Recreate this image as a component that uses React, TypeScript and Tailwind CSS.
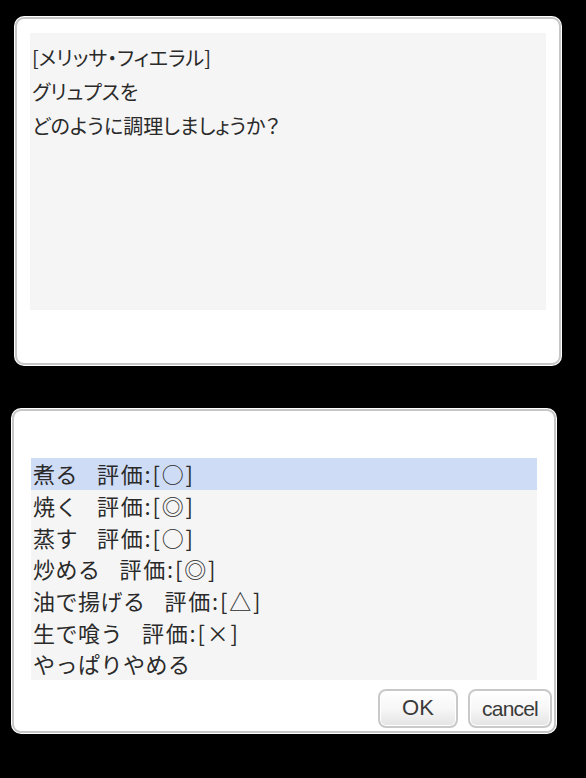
import { FC } from "react";

const jp = "font-['Noto_Sans_CJK_JP','Noto_Sans',sans-serif]";

const options: { name: string; rating?: string }[] = [
  { name: "煮る", rating: "○" },
  { name: "焼く", rating: "◎" },
  { name: "蒸す", rating: "○" },
  { name: "炒める", rating: "◎" },
  { name: "油で揚げる", rating: "△" },
  { name: "生で喰う", rating: "×" },
  { name: "やっぱりやめる" },
];

const Frame: FC<{ className: string; children: React.ReactNode }> = ({ className, children }) => (
  <div className={`rounded-[10px] bg-white p-px ${className}`}>
    <div className="h-full w-full rounded-[9px] border-2 border-[#c6c6c6] bg-white">{children}</div>
  </div>
);

const Button: FC<{ label: string; className: string }> = ({ label, className }) => (
  <button
    className={`h-[39px] rounded-[8px] border-2 border-[#c9c9c9] bg-gradient-to-b from-white via-[#f7f7f7] to-[#e4e4e4] font-['Liberation_Sans',sans-serif] leading-none text-[#3a3a3a] shadow-[inset_0_0_0_1px_#fff] ${className}`}
  >
    {label}
  </button>
);

export default function App() {
  const selected = 0;

  return (
    <div className={`flex min-h-[778px] w-full flex-col bg-black ${jp}`}>
      <Frame className="ml-[14px] mt-[16px] h-[350px] w-[548px]">
        <div className="ml-[13px] mr-[13px] mt-[14px] h-[277px] bg-[#f5f5f5] px-[2px] pt-[8px] text-[20px] leading-[34px] text-[#2a2a2a] [font-feature-settings:'palt']">
          <p>[メリッサ・フィエラル]</p>
          <p>グリュプスを</p>
          <p>どのように調理しましょうか？</p>
        </div>
      </Frame>

      <Frame className="ml-[11px] mt-[42px] h-[326px] w-[546px]">
        <div className="flex h-full flex-col">
          <ul className="ml-[17px] mt-[47px] w-[506px] bg-[#f5f5f5] text-[22px] text-[#2a2a2a]">
            {options.map((o, i) => (
              <li
                key={o.name}
                className={`flex h-[31.7px] items-center px-[2px] tracking-[0.5px] ${
                  i === selected ? "bg-[#cfdcf6]" : ""
                }`}
              >
                <span>{o.name}</span>
                {o.rating && <span className="ml-[19px] tracking-[1.8px]">評価:[{o.rating}]</span>}
              </li>
            ))}
          </ul>
          <div className="mr-[2px] mt-[9px] flex justify-end gap-[10px]">
            <Button label="OK" className="w-[80px] text-[22px]" />
            <Button label="cancel" className="w-[84px] text-[21px] tracking-[-0.8px]" />
          </div>
        </div>
      </Frame>
    </div>
  );
}
